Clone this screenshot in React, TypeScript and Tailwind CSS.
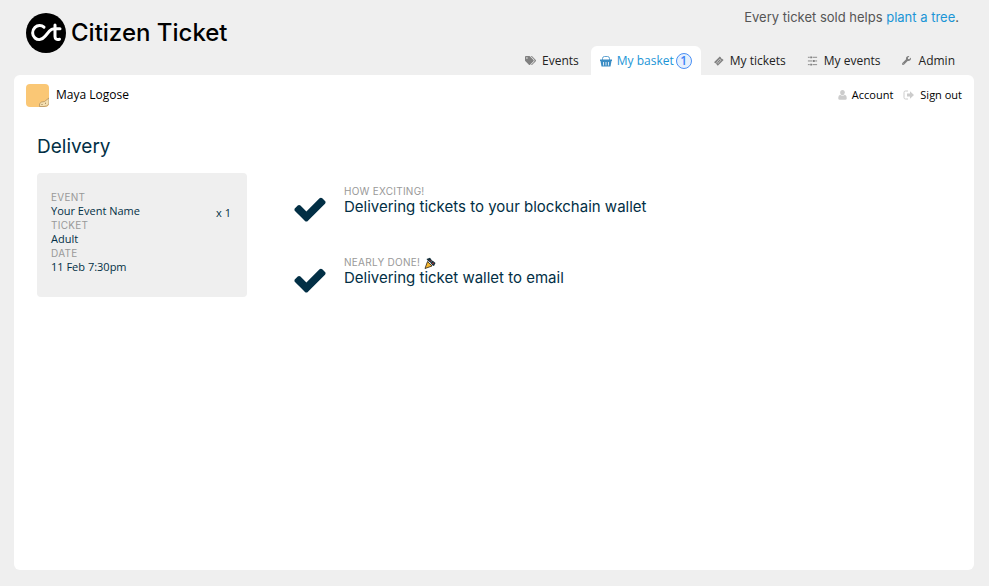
import React from 'react'
import { FaTags, FaWrench } from 'react-icons/fa'

interface Tab {
  label: string
  icon: React.ReactNode
  active?: boolean
  count?: number
}

const BasketIcon = () => (
  <svg viewBox="0 0 12 12" width="12" height="12" aria-hidden="true">
    <path d="M2.500 5V3.500Q2.500 1.500 4.500 1.500h3q2 0 2 2V5" fill="none" stroke="currentColor" strokeWidth=".8" />
    <path d="M0 4.500h12V6h-.5l-1 5.500h-9L.5 6H0z" fill="currentColor" />
    <path d="M3.500 7v3.500M6 7v3.500M8.500 7v3.500" stroke="#fff" strokeWidth=".8" />
  </svg>
)

const TicketIcon = () => (
  <svg viewBox="0 0 12 12" width="12" height="12" aria-hidden="true">
    <path d="M1 7.200 6.800 1.400l1.100 1.100q0 1.200 1.200 1.200L10.600 5 4.800 10.800 3.600 9.500q0-1.200-1.200-1.200z" fill="currentColor" />
    <path d="M3.700 7.200 6.800 4.100l1.200 1.200-3.100 3.100z" fill="none" stroke="#efefef" strokeWidth=".6" />
  </svg>
)

const SlidersIcon = () => (
  <svg viewBox="0 0 12 12" width="11" height="11" fill="none" stroke="currentColor" aria-hidden="true">
    <path d="M1 2.500h2M6 2.500h5M1 6.500h5M9 6.500h2M1 10.500h2M6 10.500h5" />
    <path d="M4.500 1.500v2M7.500 5.500v2M4.500 9.500v2" strokeWidth="2" />
  </svg>
)

const UserIcon = () => (
  <svg viewBox="0 0 9 10" width="9" height="10" fill="currentColor" aria-hidden="true">
    <ellipse cx="4.500" cy="2.600" rx="2.300" ry="2.600" />
    <path d="M2 4.800q2.500 1.800 5 0Q8.800 5.500 8.800 8.300 8.600 9.800 7.300 9.800H1.700Q.4 9.800.2 8.300.2 5.500 2 4.800z" />
  </svg>
)

const SignOutIcon = () => (
  <svg viewBox="0 0 12 12" width="12" height="12" fill="none" aria-hidden="true">
    <path d="M5 2H2.500Q1 2 1 3.500v5Q1 10 2.500 10H5" stroke="currentColor" />
    <path d="M4 4.600h3V2.200L11 6 7 9.800V7.400H4z" fill="currentColor" />
  </svg>
)

const CheckIcon = () => (
  <svg viewBox="0 0 1792 1792" width="36" height="36" fill="currentColor" className="shrink-0" aria-hidden="true">
    <path d="M1671 566q0 40-28 68l-724 724-136 136q-28 28-68 28t-68-28l-136-136-362-362q-28-28-28-68t28-68l136-136q28-28 68-28t68 28l294 295 656-657q28-28 68-28t68 28l136 136q28 28 28 68z" />
  </svg>
)

const PartyIcon = () => (
  <svg viewBox="0 0 12 12" width="12" height="12" className="ml-1" aria-hidden="true">
    <path d="M3.500 4.500 8 9 1 11.500z" fill="#f7b72c" stroke="#2b2115" strokeWidth=".8" />
    <path d="M2.500 2 6 .8 8 3.500 7 6 4 4z" fill="#17303c" />
    <path d="M6.500 6 8.500 3.500 11.500 6 10 9 8.500 8.500z" fill="#17303c" />
    <path d="M5.500 3 7 4.500M8 6.500l2-.5" stroke="#b33a3a" />
  </svg>
)

const LogoMark = () => (
  <svg viewBox="0 0 40 40" width="40" height="40" aria-hidden="true">
    <circle cx="20" cy="20" r="20" />
    <path
      d="M18 14.200C15.500 11.800 11.500 12 9 14.300c-3.300 3.200-3 8.200 0 10.700 3.400 2.800 7.300 1.600 10.300-2l4.200-5c1.500-1.700 2.700-2.300 4.500-2.300H34M29 12V23.500c0 2.400 1.500 3.400 4.500 2.700"
      fill="none"
      stroke="#fff"
      strokeWidth="3"
      strokeLinecap="round"
      strokeLinejoin="round"
    />
  </svg>
)

const Avatar = () => (
  <svg viewBox="0 0 23 23" width="23" height="23" className="rounded-sm" aria-hidden="true">
    <rect width="23" height="23" fill="#fac775" />
    <path d="M13.500 22.500q-.8-3.500 2-4.500l3-.5 4.500-3.500v6q-2 2.500-5 2.500z" fill="#f5dfb0" stroke="#a98a5b" strokeWidth=".7" />
    <path d="M15.500 20.500h1M19 19l1 .5" stroke="#8d7048" strokeWidth=".9" />
  </svg>
)

const tabs: Tab[] = [
  { label: 'Events', icon: <FaTags size={11} /> },
  { label: 'My basket', icon: <BasketIcon />, active: true, count: 1 },
  { label: 'My tickets', icon: <TicketIcon /> },
  { label: 'My events', icon: <SlidersIcon /> },
  { label: 'Admin', icon: <FaWrench size={9} /> }
]

const details = [
  { term: 'Event', value: 'Your Event Name' },
  { term: 'Ticket', value: 'Adult' },
  { term: 'Date', value: '11 Feb 7:30pm' }
]

const steps = [
  { caption: 'How exciting!', title: 'Delivering tickets to your blockchain wallet' },
  { caption: 'Nearly done!', title: 'Delivering ticket wallet to email', party: true }
]

const NavTab: React.FC<{ tab: Tab }> = ({ tab }) => (
  <a
    href="#"
    className={`flex h-[29px] items-center rounded-t-md px-[9px] ${
      tab.active ? 'bg-white text-[#1b95d6]' : 'text-[#222222]'
    }`}
  >
    <span className={`flex w-[17px] ${tab.active ? 'text-[#3a8cc4]' : 'text-[#808080]'}`}>{tab.icon}</span>
    {tab.label}
    {tab.count && (
      <span className="ml-0.5 flex size-4 items-center justify-center rounded-full border border-[#4a90f5] bg-[#e6f0fd] font-semibold text-[#3b82f6]">
        {tab.count}
      </span>
    )}
  </a>
)

const App: React.FC = () => {
  return (
    <div className="flex min-h-screen flex-col bg-[#efefef] pr-[15px] pb-4 pl-3.5 font-['Open_Sans',sans-serif] text-xs text-black">
      <header className="flex justify-between">
        <a href="#" className="flex h-[65px] items-center gap-[5px] pl-3">
          <LogoMark />
          <span className="font-['Inter',sans-serif] text-2xl font-medium">Citizen Ticket</span>
        </a>
        <div className="flex flex-col items-end">
          <p className="flex h-[46px] items-start pt-[7px] pr-[15px] font-['Inter',sans-serif] text-[13px] leading-5 text-[#555555]">
            <span>
              Every ticket sold helps <a href="#" className="text-[#1b95d6]">plant a tree</a>.
            </span>
          </p>
          <nav className="flex gap-[3px] pr-2.5">
            {tabs.map((tab) => (
              <NavTab key={tab.label} tab={tab} />
            ))}
          </nav>
        </div>
      </header>

      <main className="grow rounded-md bg-white">
        <div className="flex h-10 items-center justify-between px-3">
          <div className="flex items-center gap-[7px]">
            <Avatar />
            <span>Maya Logose</span>
          </div>
          <div className="flex gap-2.5 text-[11px]">
            <a href="#" className="flex items-center gap-[5px]">
              <span className="text-[#cccccc]"><UserIcon /></span>
              Account
            </a>
            <a href="#" className="flex items-center gap-[5px]">
              <span className="text-[#cccccc]"><SignOutIcon /></span>
              Sign out
            </a>
          </div>
        </div>

        <div className="px-[23px] pt-4 text-[#022f45]">
          <h1 className="font-['Inter',sans-serif] text-[19px] leading-8">Delivery</h1>
          <div className="mt-2.5 flex gap-[45px]">
            <section className="flex h-[124px] w-[210px] shrink-0 justify-between rounded bg-[#efefef] px-3.5 pt-[18px] text-[11px]">
              <dl>
                {details.map((detail) => (
                  <div key={detail.term}>
                    <dt className="font-['Inter',sans-serif] text-[10px] leading-3 tracking-wide text-[#999999] uppercase">{detail.term}</dt>
                    <dd className="leading-4">{detail.value}</dd>
                  </div>
                ))}
              </dl>
              <span className="pt-3.5 pr-0.5 leading-4">x 1</span>
            </section>

            <ul className="flex flex-col gap-[29px] pt-3 font-['Inter',sans-serif]">
              {steps.map((step) => (
                <li key={step.title} className="flex gap-4">
                  <span className="pt-1.5"><CheckIcon /></span>
                  <div>
                    <p className="flex items-center text-[10px] leading-[13px] tracking-wide text-[#999999] uppercase">
                      {step.caption}
                      {step.party && <PartyIcon />}
                    </p>
                    <p className="text-[15px] leading-[18px]">{step.title}</p>
                  </div>
                </li>
              ))}
            </ul>
          </div>
        </div>
      </main>
    </div>
  )
}

export default App
